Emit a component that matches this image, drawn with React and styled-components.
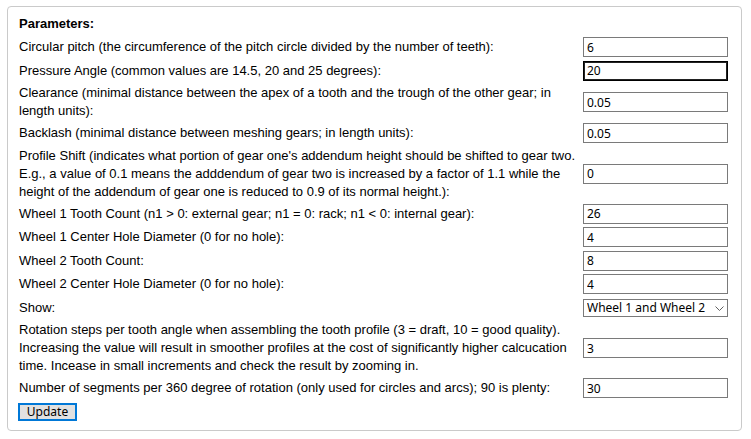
import React from "react";
import styled, { createGlobalStyle } from "styled-components";

const GlobalStyle = createGlobalStyle`
  html, body { margin: 0; padding: 0; background: #ffffff; }
  body { font-family: "Liberation Sans", Arial, sans-serif; }
`;

const Page = styled.div`
  padding: 6px 0 0 7px;
`;

const Panel = styled.form`
  box-sizing: border-box;
  width: 735px;
  margin: 0;
  border: 1px solid #cacaca;
  border-radius: 4px;
  padding: 6px 13px 9px 11px;
  display: grid;
  grid-template-columns: 560px 145px;
  column-gap: 4px;
  row-gap: 2px;
  align-items: center;
  color: #000;
  font: 13px/18px "Liberation Sans", Arial, sans-serif;
`;

const Title = styled.div`
  grid-column: 1 / -1;
  min-height: 21.5px;
  display: flex;
  align-items: center;
  font-weight: bold;
`;

const Label = styled.label`
  min-height: 21.5px;
  padding: 0.5px 0;
  box-sizing: border-box;
  display: flex;
  align-items: center;
`;

const Cell = styled.div`
  display: flex;
  align-items: center;
  position: relative;
`;

const TextInput = styled.input`
  box-sizing: border-box;
  width: 145px;
  height: 20px;
  margin: 0;
  padding: 0 3px;
  border: 1px solid ${(p) => (p.$active ? "#000" : "#7a7a7a")};
  box-shadow: ${(p) => (p.$active ? "inset 0 0 0 1px #222" : "none")};
  border-radius: 0;
  background: #fff;
  color: #000;
  font: 12px/18px "Noto Sans", "Open Sans", sans-serif;
  outline: none;
`;

const Select = styled.select`
  box-sizing: border-box;
  appearance: none;
  -webkit-appearance: none;
  width: 146px;
  height: 18px;
  margin: 0;
  padding: 0 0 0 3px;
  border: 1px solid #7a7a7a;
  border-radius: 0;
  background: #fff;
  color: #000;
  font: 12px/16px "Noto Sans", "Open Sans", sans-serif;
  outline: none;
`;

const Chevron = styled.svg`
  position: absolute;
  right: 4px;
  top: 7px;
  pointer-events: none;
`;

const Button = styled.button`
  grid-column: 1 / -1;
  justify-self: start;
  box-sizing: border-box;
  width: 59px;
  height: 18px;
  margin: 2px 0 0 -1px;
  padding: 0;
  border: 2px solid #0078d7;
  border-radius: 0;
  background: #e1e1e1;
  color: #000;
  font: 12px/14px "Noto Sans", "Open Sans", sans-serif;
`;

const fields = [
  { label: "Circular pitch (the circumference of the pitch circle divided by the number of teeth):", value: "6" },
  { label: "Pressure Angle (common values are 14.5, 20 and 25 degrees):", value: "20", active: true },
  { label: "Clearance (minimal distance between the apex of a tooth and the trough of the other gear; in length units):", value: "0.05" },
  { label: "Backlash (minimal distance between meshing gears; in length units):", value: "0.05" },
  {
    label:
      "Profile Shift (indicates what portion of gear one's addendum height should be shifted to gear two. E.g., a value of 0.1 means the adddendum of gear two is increased by a factor of 1.1 while the height of the addendum of gear one is reduced to 0.9 of its normal height.):",
    value: "0",
  },
  { label: "Wheel 1 Tooth Count (n1 > 0: external gear; n1 = 0: rack; n1 < 0: internal gear):", value: "26" },
  { label: "Wheel 1 Center Hole Diameter (0 for no hole):", value: "4" },
  { label: "Wheel 2 Tooth Count:", value: "8" },
  { label: "Wheel 2 Center Hole Diameter (0 for no hole):", value: "4" },
  { label: "Show:", select: true },
  {
    label:
      "Rotation steps per tooth angle when assembling the tooth profile (3 = draft, 10 = good quality). Increasing the value will result in smoother profiles at the cost of significantly higher calcucation time. Incease in small increments and check the result by zooming in.",
    value: "3",
  },
  { label: "Number of segments per 360 degree of rotation (only used for circles and arcs); 90 is plenty:", value: "30" },
];

export default function App() {
  return (
    <Page>
      <GlobalStyle />
      <Panel onSubmit={(e) => e.preventDefault()}>
        <Title>Parameters:</Title>
        {fields.map((f, i) => (
          <React.Fragment key={i}>
            <Label htmlFor={`f${i}`}>{f.label}</Label>
            <Cell>
              {f.select ? (
                <>
                  <Select id={`f${i}`} defaultValue="both">
                    <option value="both">Wheel 1 and Wheel 2</option>
                    <option value="w1">Wheel 1 only</option>
                    <option value="w2">Wheel 2 only</option>
                  </Select>
                  <Chevron width="9" height="5" viewBox="0 0 9 5">
                    <path d="M0.5 0.5 L4.5 4.5 L8.5 0.5" fill="none" stroke="#606060" strokeWidth="1" />
                  </Chevron>
                </>
              ) : (
                <TextInput id={`f${i}`} type="text" defaultValue={f.value} $active={f.active} />
              )}
            </Cell>
          </React.Fragment>
        ))}
        <Button type="submit">Update</Button>
      </Panel>
    </Page>
  );
}
